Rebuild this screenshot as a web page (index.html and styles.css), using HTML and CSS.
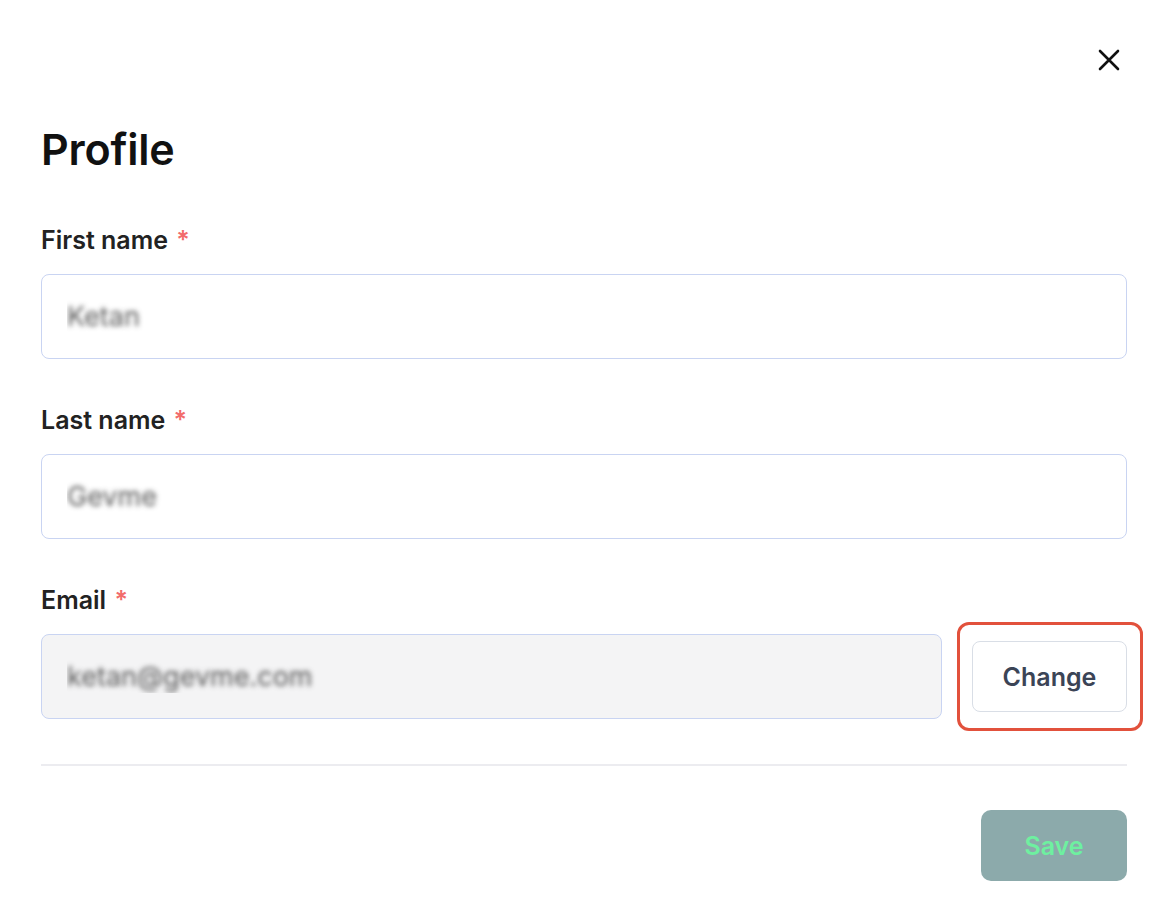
FILE: index.html
```html
<!DOCTYPE html>
<html lang="en">
<head>
<meta charset="utf-8">
<title>Profile</title>
<link rel="stylesheet" href="styles.css">
</head>
<body>
<div class="modal">
  <div class="modal-top">
    <button class="close-btn" aria-label="Close">
      <svg width="24" height="24" viewBox="0 0 24 24" fill="none" stroke="#111" stroke-width="2.6" stroke-linecap="round">
        <path d="M3 3 L21 21 M21 3 L3 21"/>
      </svg>
    </button>
  </div>
  <h1 class="title">Profile</h1>

  <div class="field">
    <label class="label">First name <span class="req">*</span></label>
    <input class="input" type="text" value="Ketan">
  </div>

  <div class="field">
    <label class="label">Last name <span class="req">*</span></label>
    <input class="input" type="text" value="Gevme">
  </div>

  <div class="field">
    <label class="label">Email <span class="req">*</span></label>
    <div class="email-row">
      <input class="input input-disabled" type="text" value="ketan@gevme.com" readonly>
      <div class="change-wrap">
        <button class="change-btn">Change</button>
        <span class="highlight"></span>
      </div>
    </div>
  </div>

  <hr class="divider">

  <div class="footer">
    <button class="save-btn">Save</button>
  </div>
</div>
</body>
</html>
```

FILE: styles.css
```css
* { box-sizing: border-box; }

html, body {
  margin: 0;
  padding: 0;
  background: #ffffff;
}

body {
  font-family: Inter, "Liberation Sans", sans-serif;
  color: #1a1a1a;
}

.modal {
  width: 1169px;
  height: 919px;
  padding: 0 42px 0 41px;
  background: #ffffff;
}

.modal-top {
  display: flex;
  justify-content: flex-end;
  padding-top: 48px;
  height: 72px;
}

.close-btn {
  width: 24px;
  height: 24px;
  padding: 0;
  margin-right: 6px;
  border: none;
  background: none;
  display: flex;
  cursor: pointer;
}

.title {
  margin: 52px 0 0 0;
  font-size: 43px;
  line-height: 50px;
  font-weight: 600;
  color: #111111;
  letter-spacing: -0.2px;
}

.field {
  display: flex;
  flex-direction: column;
  gap: 18px;
}

.title + .field {
  margin-top: 50px;
}

.field + .field {
  margin-top: 45px;
}

.label {
  font-size: 25px;
  line-height: 32px;
  font-weight: 600;
  color: #222222;
}

.req {
  color: #f26b6b;
  margin-left: 2px;
}

.input {
  width: 100%;
  height: 85px;
  border: 1.5px solid #c9d4f2;
  border-radius: 8px;
  padding: 0 25px;
  font-family: Inter, "Liberation Sans", sans-serif;
  font-size: 27px;
  color: transparent;
  text-shadow: 0 0 5px rgba(50, 50, 50, 0.8);
  background: #ffffff;
  outline: none;
}

.input-disabled {
  background: #f4f4f5;
}

.email-row {
  display: flex;
  align-items: center;
  gap: 30px;
}

.email-row .input {
  flex: 1;
  width: auto;
}

.change-wrap {
  position: relative;
  flex: 0 0 155px;
}

.change-btn {
  width: 155px;
  height: 71px;
  border: 1.5px solid #d9dee6;
  border-radius: 8px;
  background: #ffffff;
  font-family: Inter, "Liberation Sans", sans-serif;
  font-size: 25px;
  font-weight: 600;
  color: #3b4456;
  cursor: pointer;
}

.highlight {
  position: absolute;
  left: -15px;
  right: -16px;
  top: -19px;
  bottom: -19px;
  border: 3px solid #e2513c;
  border-radius: 12px;
  pointer-events: none;
}

.divider {
  margin: 45px 0 0 0;
  border: none;
  height: 2px;
  background: #ececf0;
}

.footer {
  display: flex;
  justify-content: flex-end;
  margin-top: 44px;
}

.save-btn {
  width: 146px;
  height: 71px;
  border: none;
  border-radius: 10px;
  background: #8caaab;
  font-family: Inter, "Liberation Sans", sans-serif;
  font-size: 25px;
  font-weight: 600;
  color: #6ef0a0;
  cursor: pointer;
}
```
